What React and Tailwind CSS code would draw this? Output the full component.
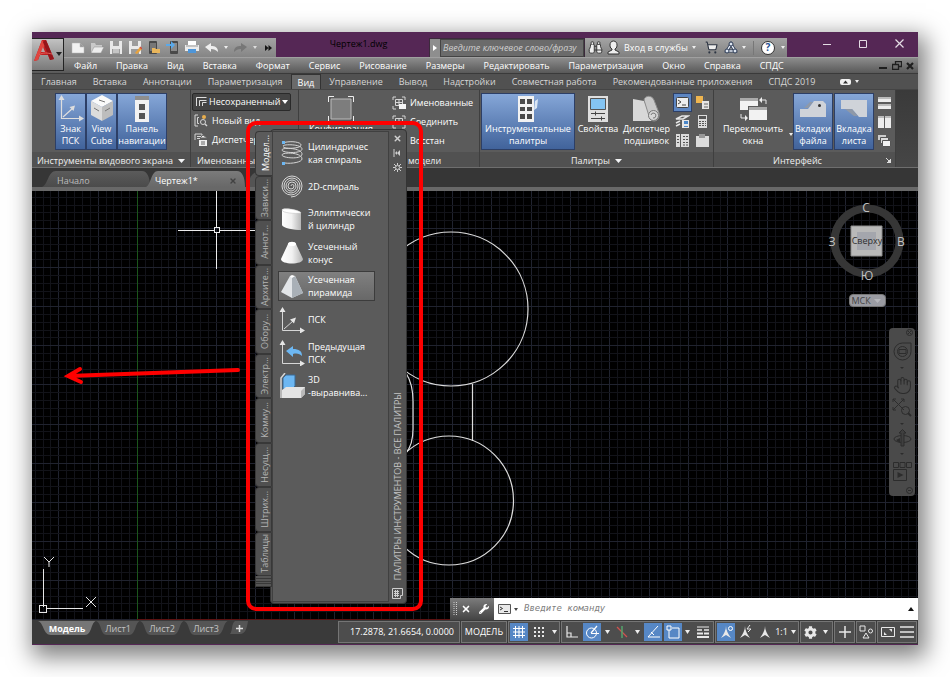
import React from 'react';
import { Binoculars, ShoppingCart, Hand, X } from 'lucide-react';
import { FaCog, FaWrench } from 'react-icons/fa';

const menus = ['Файл', 'Правка', 'Вид', 'Вставка', 'Формат', 'Сервис', 'Рисование', 'Размеры', 'Редактировать', 'Параметризация', 'Окно', 'Справка', 'СПДС'];

const ribbonTabs = ['Главная', 'Вставка', 'Аннотации', 'Параметризация', 'Вид', 'Управление', 'Вывод', 'Надстройки', 'Совместная работа', 'Рекомендованные приложения', 'СПДС 2019'];

const paletteTabs = ['Модел...', 'Зависи...', 'Аннот...', 'Архите...', 'Обору...', 'Электр...', 'Комму...', 'Несущ...', 'Штрих...', 'Таблицы'];

const Icon = ({ w = 16, h = 16, className = '', children }) => (
    <svg width={w} height={h} viewBox={`0 0 ${w} ${h}`} fill="none" aria-hidden="true" className={`shrink-0 ${className}`}>
        {children}
    </svg>
);

const Caret = ({ className = 'text-gray-100' }) => (
    <Icon w={7} h={4} className={className}>
        <path d="M0 0h7L3.5 4z" fill="currentColor" />
    </Icon>
);

/* ---------- title bar ---------- */

const quickIcons = [
    ['Создать', <path d="M1 3h8l4 4v6H1z M9 3v4h4" fill="#f2f2f2" stroke="#b5b5b5" strokeWidth=".5" />],
    ['Открыть', <><path d="M1 13V3h4l1 2h6v2" fill="#c9c9c9" /><path d="M1 13l3-6h10l-3 6z" fill="#ededed" stroke="#8a8a8a" strokeWidth=".5" /></>],
    ['Сохранить', <><path d="M1 1h12v13H1z" fill="#e9e9e9" /><path d="M4 1h6v5H4zM3 9h8v5H3z" fill="#9c9c9c" /><path d="M4 10h6M4 12h6" stroke="#eee" /></>],
    ['Сохранить как', <><path d="M1 1h12v13H1z" fill="#e9e9e9" /><path d="M4 1h6v5H4zM3 9h8v5H3z" fill="#9c9c9c" /><path d="M7 13l5-6 2 2-5 5z" fill="#e8a23c" /><path d="M12 7l2 2" stroke="#d24b3e" strokeWidth="1.5" /></>],
    ['Открыть из облака', <><rect x="2" y="1" width="8" height="13" rx="1" fill="#494949" /><path d="M3 3h6v8H3z" fill="#777" /><path d="M5 13V8h3l1 1h4v4z" fill="#e9b65c" /></>],
    ['Сохранить в облако', <><rect x="4" y="1" width="8" height="13" rx="1" fill="#494949" /><path d="M5 3h6v8H5z" fill="#8a8a8a" /><path d="M0 4h5V1l4 4-4 4V6H0z" fill="#5aa9ea" /></>],
    ['Печать', <><path d="M3 1h8v4H3z" fill="#fff" /><path d="M0 5h14v6H0z" fill="#ececec" /><path d="M3 9h8v4H3z" fill="#4f96d8" /><path d="M1 6h12" stroke="#999" /></>],
];

const QuickAccess = () => (
    <div className="flex h-[19px] w-[212px] items-center bg-linear-to-b from-[#a4a4a4] to-[#858585] pl-1">
        {quickIcons.map(([name, art]) => (
            <button key={name} aria-label={name} className="flex w-[19px] justify-center">
                <Icon w={14} h={15}>{art}</Icon>
            </button>
        ))}
        <button aria-label="Отменить" className="ml-1 flex items-center gap-1.5">
            <Icon w={13} h={10}><path d="M0 4l6-4v3c4 0 7 1 7 6-2-2-4-3-7-3v3z" fill="#efefef" /></Icon>
            <Icon w={4} h={3}><path d="M0 0h4L2 3z" fill="#eee" /></Icon>
        </button>
        <button aria-label="Повторить" className="ml-1.5 flex items-center gap-1.5">
            <Icon w={13} h={10}><path d="M13 4L7 0v3C3 3 0 4 0 9c2-2 4-3 7-3v3z" fill="#777" /></Icon>
            <Icon w={4} h={3}><path d="M0 0h4L2 3z" fill="#ddd" /></Icon>
        </button>
        <button aria-label="Адаптация панели" className="ml-2">
            <Icon w={7} h={6}><path d="M0 0l3.500 3L0 6zM3.500 0L7 3 3.500 6z" fill="#151515" /></Icon>
        </button>
    </div>
);

const TitleBar = () => (
    <header className="flex h-[25px] items-end bg-[#552755]">
        <div className="w-8" />
        <QuickAccess />
        <h1 className="flex-1 pb-[7px] pl-3 text-center text-[9px] leading-3 text-black">Чертеж1.dwg</h1>
        <div className="flex h-[19px] border border-b-0 border-[#3c2a3c]">
            <button aria-label="Свернуть поиск" className="flex w-[10px] items-center justify-center bg-[#8e8e8e]">
                <Icon w={4} h={6}><path d="M0 0l4 3-4 3z" fill="#fff" /></Icon>
            </button>
            <input
                aria-label="Поиск"
                placeholder="Введите ключевое слово/фразу"
                className="w-[144px] border border-[#444] bg-[#6b6b6b] px-[2px] text-[9px] italic placeholder:text-[#cfcfcf]"
            />
        </div>
        <div className="flex h-[19px] w-[202px] items-center bg-linear-to-b from-[#a4a4a4] to-[#808080] pl-[3px] text-[#fff]">
            <Binoculars size={15} strokeWidth={1.5} fill="#eee" className="text-[#333]" />
            <button className="ml-1 flex items-center gap-1 text-[9px] text-white">
                <Icon w={13} h={15}>
                    <path d="M1 14h11v-2c-1-1-3-1-4-2V9c2-1 2-3 2-4 0-2-1-4-3.500-4S3 3 3 5c0 1 0 3 2 4v1c-1 1-3 1-4 2z" fill="#eee" stroke="#333" />
                </Icon>
                Вход в службы
                <Icon w={4} h={3}><path d="M0 0h4L2 3z" fill="#eee" /></Icon>
            </button>
            <button aria-label="Магазин приложений" className="ml-[9px]">
                <ShoppingCart size={13} strokeWidth={2} fill="#eee" className="text-[#2c3442]" />
            </button>
            <button aria-label="Autodesk 360" className="ml-1.5 flex items-center gap-1">
                <Icon w={14} h={13}>
                    <path d="M7 3L3 10h8z" stroke="#2b3a55" strokeWidth="3" />
                    <path d="M7 3L3 10h8z" stroke="#e8edf5" strokeWidth="1.500" />
                    <circle cx="7" cy="3" r="2" fill="#dfe6f0" stroke="#2b3a55" />
                    <circle cx="3" cy="10" r="2" fill="#dfe6f0" stroke="#2b3a55" />
                    <circle cx="11" cy="10" r="2" fill="#dfe6f0" stroke="#2b3a55" />
                </Icon>
                <Icon w={4} h={3}><path d="M0 0h4L2 3z" fill="#eee" /></Icon>
            </button>
            <span className="ml-[7px] h-3.5 w-px bg-[#777]" />
            <button aria-label="Справка" className="ml-[7px] flex items-center gap-1.5">
                <span className="flex size-[14px] items-center justify-center rounded-full border border-[#333] bg-white text-[10px] font-bold text-[#1f4f93]">?</span>
                <Icon w={4} h={3}><path d="M0 0h4L2 3z" fill="#eee" /></Icon>
            </button>
        </div>
        <div className="flex h-full w-[131px] items-center justify-end gap-[28px] pr-[14px] pb-[2px] text-[#e5dce5]">
            <button aria-label="Свернуть"><Icon w={8} h={8}><path d="M0 4.500h8" stroke="currentColor" /></Icon></button>
            <button aria-label="Развернуть"><Icon w={8} h={8}><path d="M.5.5h7v7h-7z" stroke="currentColor" /></Icon></button>
            <button aria-label="Закрыть"><Icon w={9} h={9}><path d="M.5.500l8 8m0-8l-8 8" stroke="currentColor" strokeWidth="1.200" /></Icon></button>
        </div>
    </header>
);

const AppButton = () => (
    <button aria-label="Меню приложения" className="absolute top-1.5 left-0 flex h-[33px] w-8 items-start border border-l-0 border-[#222] bg-linear-to-b from-[#c2c2c2] to-[#7a7a7a] pl-[2px]">
        <Icon w={21} h={24}>
            <path d="M0 22L8 1h4l8 19-4 1-2-5H6l-2 5z" fill="#c11f22" />
            <path d="M8 1l3 5-5 9-2 6-4 1z" fill="#e0453f" />
            <path d="M12 1l8 19-4 1L9 3z" fill="#94151b" />
            <path d="M9 8l2 5H7z" fill="#b5a5a5" />
            <path d="M5 16c4-3 9-2 13-1" stroke="#e5605a" />
        </Icon>
        <Icon w={6} h={4} className="mt-[13px] ml-[1px]"><path d="M0 0h6L3 4z" fill="#222" /></Icon>
    </button>
);

const MenuBar = () => (
    <nav className="flex h-4 items-center border-t border-[#a0a0a0] bg-linear-to-b from-[#8c8c8c] to-[#595959] pr-1 pl-[42px]">
        {menus.map((m) => (
            <button key={m} className="mr-[19px] text-[9px] leading-3 whitespace-nowrap text-white">{m}</button>
        ))}
        <div className="ml-auto flex items-center gap-1 text-[#1f1f1f]">
            <button aria-label="Свернуть чертеж"><Icon w={9} h={9}><path d="M0 7h8" stroke="currentColor" strokeWidth="2" /></Icon></button>
            <button aria-label="Восстановить чертеж"><Icon w={10} h={9}><path d="M3.500 3V.500h6v5H7M.5 3.500h6v5h-6z" stroke="currentColor" strokeWidth="1.300" /></Icon></button>
            <button aria-label="Закрыть чертеж"><Icon w={8} h={8}><path d="M1 1l6 6m0-6L1 7" stroke="currentColor" strokeWidth="2.200" /></Icon></button>
        </div>
    </nav>
);

/* ---------- ribbon ---------- */

const RibbonTabs = () => (
    <div className="flex h-[17px] border-y border-t-[#3a3a3a] border-b-[#444] bg-[#515151] pl-px">
        {ribbonTabs.map((t) => (
            <button
                key={t}
                className={t === 'Вид'
                    ? 'border-x border-t border-[#333] bg-[#6a6a6a] px-[6px] text-[9px] leading-[15px] text-white'
                    : 'px-2 text-[9px] leading-[15px] whitespace-nowrap text-[#d6d6d6]'}
            >
                {t}
            </button>
        ))}
        <button aria-label="Свернуть ленту" className="ml-[17px] flex items-center gap-1">
            <Icon w={11} h={6}><rect width="11" height="6" rx="2" fill="#f2f2f2" /><path d="M3 4.500h5L5.500 1.500z" fill="#333" /></Icon>
            <Icon w={4} h={3}><path d="M0 0h4L2 3z" fill="#eee" /></Icon>
        </button>
    </div>
);

const Panel = ({ title, caret, className = '', titleClass = 'justify-center', children }) => (
    <section className={`flex flex-col border-r border-[#3f3f3f] bg-[#5b5b5b] ${className}`}>
        <div className="flex h-[62px] items-start pt-[3px]">{children}</div>
        <div className={`flex flex-1 items-center gap-[5px] bg-[#515151] pt-[2px] text-[9px] leading-[13px] whitespace-nowrap text-[#efefef] ${titleClass}`}>
            {title}
            {caret && <Caret />}
        </div>
    </section>
);

const BigButton = ({ active, art, lines, className = '' }) => (
    <button
        className={`flex h-[57px] shrink-0 flex-col items-center border text-[9px] leading-3 text-white ${active ? 'border-[#2d3f66] bg-linear-to-b from-[#86a7d8] to-[#41639b]' : 'border-transparent'} ${className}`}
    >
        <span className="flex h-[29px] items-center">{art}</span>
        {lines.map((l) => <span key={l} className="whitespace-nowrap">{l}</span>)}
    </button>
);

const SmallButton = ({ art, label }) => (
    <button className="flex h-[19px] items-center gap-1 text-[9px] whitespace-nowrap text-white">
        {art}
        {label}
    </button>
);

const UcsArt = () => (
    <Icon w={26} h={27}>
        <path d="M3.500 3v20.500H22M5 22L15 13" stroke="#dedede" strokeWidth="1.200" />
        <path d="M.5 5l3-5 3 5zM21 20.500l5 3-5 3zM11.500 12l5.500-1.500-1.500 5.500z" fill="#dedede" />
    </Icon>
);

const CubeArt = () => (
    <Icon w={24} h={27}>
        <path d="M12 0l11 6-11 6L1 6z" fill="#fafafa" />
        <path d="M1 6l11 6v14L1 20z" fill="#dcdcdc" />
        <path d="M23 6l-11 6v14l11-6z" fill="#bdbdbd" />
        <path d="M9 5l6 2M4 13l5 3M15 16l5-3" stroke="#777" />
    </Icon>
);

const NavPanelArt = () => (
    <Icon w={14} h={26}>
        <path d="M0 0h14v26H0z" fill="#f2f2f2" /><path d="M0 0h14v4H0z" fill="#8e8e8e" />
        <path d="M4 8h6v6H4zM4 17h6v6H4z" fill="#555" />
    </Icon>
);

const ViewportsArt = ({ badge }) => (
    <Icon w={14} h={14}>
        <path d="M1 4V1h3M10 1h3v3M1 10v3h3" stroke="#d5d5d5" />
        <path d="M3.500 3.500h7v6h-7zM7 3v7M3 6.500h8" stroke="#d5d5d5" />
        {badge ? <path d="M7 8h7v5H7z" fill="#f5f5f5" /> : <path d="M13 10v3h-3" stroke="#d5d5d5" />}
    </Icon>
);

const PaletteArt = () => (
    <Icon w={20} h={26}>
        <path d="M0 0h16v26H0z" fill="#f2f2f2" />
        <path d="M17 5l3-2-1 9-3 2z" fill="#dbe7f5" />
        <path d="M2 3h5v5H2zM9 3h5v5H9zM2 11h5v4H2zM9 11h5v4H9zM2 18h5v5H2zM9 18h5v5H9z" fill="#4a4a4a" />
    </Icon>
);

const PropsArt = () => (
    <Icon w={20} h={26}>
        <path d="M0 0h20v26H0z" fill="#dfdfdf" />
        <path d="M2.500 2.500h15v11h-15z" fill="#84c4f2" stroke="#555" />
        <path d="M3 17.500h14M3 22.500h14M7.500 15.500v4M13.500 20.500v4" stroke="#444" />
    </Icon>
);

const SheetSetArt = () => (
    <Icon w={27} h={27}>
        <path d="M0 4l11 2 9 20H0z" fill="#d8d8d8" />
        <path d="M11 5c1-5 8-5 10 0l5 13c1 5-2 8-5 8s-4-2-5-5z" fill="#c9c9c9" stroke="#8c8c8c" />
        <circle cx="20.500" cy="20.500" r="5" fill="#d8d8d8" stroke="#777" />
        <path d="M18 20a2.500 2.500 0 1 1 2 3" stroke="#777" />
    </Icon>
);

const SwitchArt = () => (
    <Icon w={27} h={24}>
        <path d="M0 1h18v12H0z" fill="#f2f2f2" /><path d="M0 1h18v3H0z" fill="#aaa" />
        <path d="M8 9h19v15H8z" fill="#5b5b5b" /><path d="M9 10h18v13H9z" fill="#f2f2f2" /><path d="M9 10h18v3H9z" fill="#aaa" />
        <path d="M21 3h5v4M1 17v4h5" stroke="#e8e8e8" /><path d="M22 0v6l-3-3zM5 18l3 3-3 3z" fill="#eee" />
    </Icon>
);

const FileTabsArt = () => (
    <Icon w={26} h={17}>
        <path d="M0 9h8l6-8h9l3 3v13H0z" fill="#cfd3d9" /><path d="M4 8L10 2h3L8 8z" fill="#8f99a8" />
        <circle cx="19.500" cy="5.500" r="1.500" fill="#333" />
    </Icon>
);

const LayoutTabsArt = () => (
    <Icon w={26} h={17}>
        <path d="M0 0h26v17h-8l-7-8H0z" fill="#cfd3d9" /><path d="M4 9h7l6 7h-4z" fill="#8f99a8" />
    </Icon>
);

const toolGrid = [
    ['Командная строка', <><rect x="1.500" y="2.500" width="12" height="10" rx="1" fill="#eee" stroke="#444" /><path d="M3 5l3 2-3 2M7 10h4" stroke="#444" /></>],
    ['Диспетчер внешних ссылок', <><path d="M1 1h7v7H1z" fill="#efb54f" /><path d="M7 6h7v8H7z" fill="#e6e6e6" /><path d="M9 9h4M9 12h4M9.500 2v3" stroke="#666" /></>],
    ['Слои', <><path d="M1 5l6-3h6l-5 3zM1 9l4-2M1 12l4-2" stroke="#e6e6e6" strokeWidth="1.500" /><path d="M7 6h7v8H7z" fill="#e6e6e6" /><path d="M9 7h4v3H9zM9 12h4v1H9z" fill="#4a86c8" /></>],
    ['Калькулятор', <><path d="M3 1h9v13H3z" fill="#dcdcdc" /><path d="M4 2h7v3H4z" fill="#555" /><path d="M4 7.500h7M4 9.500h7M4 11.500h7" stroke="#555" strokeDasharray="2 1" /></>],
    ['Блоки', <><path d="M1 1h4v13H1zM6 1h8v13H6z" fill="#dcdcdc" /><path d="M2 3.500h2M2 6.500h2M2 9.500h2M8 3.500h5M8 6.500h5M8 9.500h5M8 12h5" stroke="#555" strokeDasharray="2 1" /></>],
    ['Буфер', <><path d="M1 3h13v11H1z" fill="#dcdcdc" /><path d="M4 1h6v4H4z" fill="#999" /></>],
];

const windowIcons = [
    ['Мозаика по горизонтали', <><path d="M0 1h13v5H0zM0 8h13v5H0z" fill="#ececec" /><path d="M0 1h13v2H0zM0 8h13v2H0z" fill="#bbb" /></>],
    ['Мозаика по вертикали', <><path d="M0 1h6v12H0zM7 1h6v12H7z" fill="#ececec" /><path d="M0 1h6v2H0zM7 1h6v2H7z" fill="#bbb" /></>],
    ['Каскадом', <><path d="M0 1h8v5H0z" fill="#ccc" /><path d="M2.500 3.500h8v6h-8z" fill="#ddd" stroke="#555" /><path d="M4.500 6.500h8v6h-8z" fill="#f2f2f2" stroke="#555" /></>],
];

const Ribbon = () => (
    <div className="flex h-[78px] border-b border-[#6e6e6e] bg-linear-to-b from-[#3a3a3a] to-[#464646]">
        <Panel title="Инструменты видового экрана" caret className="w-[159px]" titleClass="pl-[5px]">
            <div className="flex pl-[23px]">
                <BigButton active art={<UcsArt />} lines={['Знак', 'ПСК']} className="w-[31px]" />
                <BigButton active art={<CubeArt />} lines={['View', 'Cube']} className="w-[31px]" />
                <BigButton active art={<NavPanelArt />} lines={['Панель', 'навигации']} className="w-[50px]" />
            </div>
        </Panel>
        <Panel title="Именованные" className="w-[108px]" titleClass="pl-[6px]">
            <div className="flex flex-col pl-px">
                <label className="relative flex h-[18px] w-[99px] items-center rounded-xs border border-[#2a2a2a] bg-[#444]">
                    <Icon w={11} h={10} className="absolute left-[3px]">
                        <path d="M.5 9V.500h10M3.500 9V3.500h7M6.500 9V5.500h4" stroke="#ddd" />
                    </Icon>
                    <select aria-label="Вид" className="h-full w-full appearance-none pl-4 text-[9px] text-white">
                        <option>Несохраненный</option>
                    </select>
                    <span className="pointer-events-none absolute right-[2px]"><Icon w={6} h={4}><path d="M0 0h6L3 4z" fill="#fff" /></Icon></span>
                </label>
                <div className="flex flex-col pl-[2px]">
                    <SmallButton label="Новый вид" art={<Icon w={14} h={13}><path d="M4 1H1v11h3M5 3.500H3.500v6H5" stroke="#d5d5d5" /><circle cx="9" cy="8" r="2.500" stroke="#d5d5d5" /><path d="M11 10l2 2" stroke="#d5d5d5" strokeWidth="1.500" /><circle cx="10" cy="3" r="2" fill="#e9ae4c" /></Icon>} />
                    <SmallButton label="Диспетчер" art={<Icon w={14} h={13}><path d="M1 7V1h7v3M3 3.500h4M3 5.500h3" stroke="#d5d5d5" /><path d="M5 7h8v6H5z" fill="#eee" /><path d="M6 5l3-3 4 3zM7 9h4M7 11h4" fill="#eee" stroke="#666" /></Icon>} />
                </div>
            </div>
        </Panel>
        <Panel title="модели" className="w-[181px]" titleClass="pl-[109px]">
            <BigButton
                className="ml-[6px] w-[72px]"
                lines={['Конфигурация']}
                art={<Icon w={26} h={26}><path d="M3 3h20v20H3z" fill="#7d7d7d" stroke="#bbb" /><path d="M.5 6V.500H6M20 .500h5.500V6M.5 20v5.500H6M20 25.500h5.500V20" stroke="#eee" /></Icon>}
            />
            <div className="ml-[15px] flex flex-col">
                <SmallButton label="Именованные" art={<ViewportsArt badge />} />
                <SmallButton label="Соединить" art={<ViewportsArt />} />
                <SmallButton label="Восстан" art={<ViewportsArt />} />
            </div>
        </Panel>
        <Panel title="Палитры" caret className="w-[234px]">
            <BigButton active art={<PaletteArt />} lines={['Инструментальные', 'палитры']} className="ml-px w-[94px]" />
            <BigButton art={<PropsArt />} lines={['Свойства']} className="w-[46px]" />
            <BigButton art={<SheetSetArt />} lines={['Диспетчер', 'подшивок']} className="w-[51px]" />
            <div className="ml-px grid grid-cols-2 gap-x-px">
                {toolGrid.map(([name, art], i) => (
                    <button key={name} aria-label={name} className={`flex h-[19px] w-[19px] items-center justify-center ${i === 0 ? 'border border-[#2d3f66] bg-[#5d86c2]' : ''}`}>
                        <Icon w={15} h={15}>{art}</Icon>
                    </button>
                ))}
            </div>
        </Panel>
        <Panel
            title={<><span className="flex-1 text-center">Интерфейс</span><Icon w={5} h={5} className="mr-1"><path d="M0 0l4 4M5 1v4H1z" stroke="#ddd" fill="#ddd" /></Icon></>}
            className="w-[182px]"
        >
            <BigButton art={<SwitchArt />} lines={['Переключить', 'окна']} className="ml-[3px] w-[72px]" />
            <Icon w={4} h={3} className="mt-10"><path d="M0 0h4L2 3z" fill="#eee" /></Icon>
            <BigButton active art={<FileTabsArt />} lines={['Вкладки', 'файла']} className="w-[40px]" />
            <BigButton active art={<LayoutTabsArt />} lines={['Вкладка', 'листа']} className="ml-px w-[40px]" />
            <div className="ml-1 flex flex-col">
                {windowIcons.map(([name, art]) => (
                    <button key={name} aria-label={name} className="flex h-[19px] items-center"><Icon w={13} h={14}>{art}</Icon></button>
                ))}
            </div>
        </Panel>
    </div>
);

const FileTabs = () => (
    <div className="flex h-[23px] items-end border-b-4 border-[#686868] bg-[#363636] pl-[10px]">
        <button className="h-4 w-[108px] bg-linear-to-b from-[#5b5b5b] to-[#4b4b4b] pt-[3px] pl-[15px] text-left text-[9px] leading-[13px] text-[#bdbdbd] [clip-path:path('M0_16C6_14_6_0_14_0H100C105_0_108_6_108_16Z')]">Начало</button>
        <div className="-ml-1 flex h-4 w-[99px] items-center bg-linear-to-b from-[#7b7b7b] to-[#686868] pt-[3px] pr-[8px] pl-[9px] leading-[13px] [clip-path:path('M0_16C5_14_5_0_12_0H91C96_0_99_6_99_16Z')]">
            <button className="text-[9px] text-white">Чертеж1*</button>
            <button aria-label="Закрыть вкладку" className="ml-auto text-[#424242]"><X size={8} strokeWidth={4} /></button>
        </div>
        <button aria-label="Новый чертеж" className="ml-1 h-4 w-[26px] rounded-t-xl bg-[#545454]" />
    </div>
);

/* ---------- drawing area ---------- */

const STEP_X = 39.36;
const STEP_Y = 39.1;

const Grid = () => {
    const cols = Array.from({ length: 260 }, (_, i) => i - 15);
    const rows = Array.from({ length: 150 }, (_, i) => i - 60);
    const lineColor = (i) => (i % 5 ? '#121319' : '#20232f');
    return (
        <g shapeRendering="crispEdges">
            {cols.map((i) => (
                <path key={`c${i}`} d={`M${Math.round(105 + (i * STEP_X) / 5)}.5 0V2000`} stroke={lineColor(i)} />
            ))}
            {rows.map((i) => (
                <path key={`r${i}`} d={`M0 ${Math.round(428 + (i * STEP_Y) / 5)}.5H3000`} stroke={lineColor(i)} />
            ))}
            <path d="M105.500 0V429" stroke="#1b551b" />
            <path d="M105 428.500H3000" stroke="#5c1212" />
        </g>
    );
};

const ViewCube = () => (
    <div className="absolute top-[8px] right-[10px] flex w-[82px] flex-col items-center">
        <svg width="82" height="88" viewBox="-2 -3 82 88" role="img" aria-label="Видовой куб" className="overflow-visible font-[Open_Sans]">
            <circle cx="39" cy="39" r="32.500" fill="none" stroke="#363636" strokeWidth="8" />
            <path d="M23 24h31v30H23z" fill="#b9b9b9" stroke="#8d8d8d" />
            <path d="M29 30h19v18H29z" fill="#a4a6ad" />
            <g fill="#c2c2c2" fontSize="12" textAnchor="middle">
                <text x="38" y="10">С</text>
                <text x="73" y="44">В</text>
                <text x="4" y="44">З</text>
                <text x="39" y="78">Ю</text>
            </g>
            <text x="39" y="42" fill="#2d2d2d" fontSize="9" textAnchor="middle">Сверху</text>
        </svg>
        <button className="mt-[7px] flex h-[13px] w-[37px] items-center justify-between rounded-sm border border-[#777] bg-[#9a9ba2] pr-1 pl-[2px] text-[9px] leading-none text-[#444]">
            МСК
            <Icon w={7} h={4}><path d="M0 0h7L3.500 4z" fill="#b5b6bb" /></Icon>
        </button>
    </div>
);

const NavBar = () => (
    <div className="absolute top-[137px] right-[3px] flex h-[168px] w-[26px] flex-col items-center rounded-sm bg-[#4a4a4a] text-[#2c2c2c]">
        <button aria-label="Закрыть панель" className="mt-px mr-[2px] self-end"><Icon w={7} h={7}><circle cx="3.500" cy="3.500" r="3" stroke="currentColor" /><path d="M2 2l3 3m0-3L2 5" stroke="currentColor" /></Icon></button>
        <button aria-label="Штурвал" className="mt-[6px] flex flex-col items-center gap-[6px]">
            <Icon w={19} h={19}><path d="M9.500 1H18v8.500a8.500 8.500 0 1 1-8.500-8.500z" stroke="currentColor" /><circle cx="9.500" cy="9.500" r="5" stroke="currentColor" /><path d="M6 7.500h7v4H6z" stroke="currentColor" /></Icon>
            <Icon w={4} h={2}><path d="M0 0h4L2 2z" fill="currentColor" /></Icon>
        </button>
        <button aria-label="Панорамирование" className="mt-[7px]"><Hand size={19} strokeWidth={1.3} /></button>
        <button aria-label="Зумирование" className="mt-[3px] flex flex-col items-center gap-[6px]">
            <Icon w={20} h={19}><path d="M1 1l11 11M12 1L1 12M1 4V1h3M9 1h3v3M1 9v3h3" stroke="currentColor" /><circle cx="13.500" cy="12.500" r="4" stroke="currentColor" /><path d="M16 15l3 3" stroke="currentColor" strokeWidth="2" /></Icon>
            <Icon w={4} h={2}><path d="M0 0h4L2 2z" fill="currentColor" /></Icon>
        </button>
        <button aria-label="Орбита" className="mt-[4px] flex flex-col items-center gap-[6px]">
            <Icon w={19} h={18}><ellipse cx="9.500" cy="10" rx="8.500" ry="3.500" stroke="currentColor" /><path d="M8 17V4H6l3.500-3.500L13 4h-2v13z" fill="#3f3f3f" stroke="currentColor" /><path d="M3 11l4 3V9z" fill="currentColor" /></Icon>
            <Icon w={4} h={2}><path d="M0 0h4L2 2z" fill="currentColor" /></Icon>
        </button>
        <button aria-label="ShowMotion" className="mt-[7px]"><Icon w={19} h={19}><path d="M.5.500h5v5h-5zM7 .500h5v5H7zM13.500.500h5v5h-5zM.5 7.500h13v11H.5z" stroke="currentColor" /><path d="M4.500 10l6 3-6 3z" fill="currentColor" /></Icon></button>
        <button aria-label="Настройка панели" className="mt-auto mr-[2px] mb-[2px] self-end"><Icon w={7} h={7}><circle cx="3.500" cy="3.500" r="3" stroke="currentColor" /><path d="M2 3.500h3" stroke="currentColor" /></Icon></button>
    </div>
);

const CommandLine = () => (
    <div className="absolute right-0 bottom-0 left-[418px] flex h-[22px] bg-white">
        <div className="flex w-11 items-center bg-linear-to-b from-[#7c7c7c] to-[#444] pl-[3px] text-white">
            <Icon w={5} h={14}><path d="M1 0v14M3.500 0v14" stroke="#cfcfcf" strokeDasharray="1 1" /></Icon>
            <button aria-label="Закрыть" className="ml-[3px]"><X size={10} strokeWidth={4} /></button>
            <button aria-label="Адаптация" className="ml-[8px]"><FaWrench size={10} /></button>
        </div>
        <button aria-label="Последние команды" className="ml-1 flex items-center gap-[3px]">
            <Icon w={13} h={10}><path d="M.5.500h12v9H.5z" fill="#e8e8e8" stroke="#555" /><path d="M2 3l2.500 1.500L2 6M6 7.500h4" stroke="#333" /></Icon>
            <Icon w={4} h={3}><path d="M0 0h4L2 3z" fill="#444" /></Icon>
        </button>
        <input aria-label="Команда" placeholder="Введите команду" className="min-w-0 flex-1 pl-1.5 font-[DejaVu_Sans_Mono] text-[9px] italic placeholder:text-[#808080]" />
        <button aria-label="Развернуть журнал" className="mr-1"><Icon w={6} h={4}><path d="M0 4h6L3 0z" fill="#111" /></Icon></button>
    </div>
);

const DrawingArea = () => (
    <main className="relative min-h-[429px] flex-1 overflow-hidden bg-black">
        <svg className="absolute inset-0 h-full w-full" fill="none" aria-hidden="true">
            <Grid />
            <g stroke="#dcdcdc" strokeWidth="1.200">
                <circle cx="419" cy="118" r="77" />
                <circle cx="417" cy="309.500" r="64.500" />
                <path d="M440.500 193v57M374 182c5 8 7 16 7 28v28c0 10-2 18-7 24" />
            </g>
            <path d="M184.500 0v36M184.500 42v36M146 39.500h36M188 39.500h37M182.500 36.500h5v5h-5z" stroke="#ececec" shapeRendering="crispEdges" />
        </svg>
        <svg width="60" height="60" viewBox="0 0 60 60" fill="none" stroke="#e6e6e6" aria-hidden="true" className="absolute bottom-[3px] left-[7px]">
            <path d="M4.500 12v38M8 51.500h36M.5 48.500h7v7h-7z" shapeRendering="crispEdges" />
            <path d="M5 0l5 5 5-5M10 5v5M47 40l10 10M57 40L47 50" />
        </svg>
        <ViewCube />
        <NavBar />
        <CommandLine />
    </main>
);

/* ---------- tool palette ---------- */

const paletteItems = [
    ['Цилиндричес', 'кая спираль', <><path d="M5 2.500c9-2 18 0 17 3s-17 4-18 1M4 6c0-2 19-2 19 3s-20 4-20 1 20-2 20 4-20 4-20 1 20-3 20 4c0 3-10 5-17 4" /><path d="M3 1h3v3H3zM3 22h3v3H3z" fill="#6db7f2" stroke="none" /></>],
    ['2D-спираль', null, <path d="M12 13a1.500 1.500 0 0 1 3 0 3 3 0 0 1-6 0 4 4 0 0 1 8 0 5 5 0 0 1-10 0 6 6 0 0 1 12 0 7 7 0 0 1-14 0 8 8 0 0 1 16 0 9 9 0 0 1-18 0 10 10 0 0 1 20 0 11 11 0 0 1-11 11" />],
    ['Эллиптически', 'й цилиндр', <><path d="M3 4c0-3 19 0 19 3v17c-6 0-19-2-19-5z" fill="url(#solid)" stroke="none" /><path d="M3 4c0-3 19 0 19 3-5 1-19 0-19-3z" fill="#fff" stroke="#bbb" strokeWidth=".5" /></>],
    ['Усеченный', 'конус', <><path d="M9 4c1-3 7-3 8 0l7 15c0 6-22 6-22 0z" fill="url(#solid)" stroke="none" /><ellipse cx="13" cy="4" rx="4" ry="2" fill="#fff" stroke="none" /></>],
    ['Усеченная', 'пирамида', <><path d="M11 3h5l8 17-11 5L2 19z" fill="#e2e5e8" stroke="none" /><path d="M13 4l3-1 8 17-11 5z" fill="#a9b0b7" stroke="none" /><path d="M11 3l2-1 3 1-3 2z" fill="#fff" stroke="none" /></>],
    ['ПСК', null, <><path d="M3.500 4v19.500H22M5 22l9-8" /><path d="M.5 5l3-5 3 5zM21 20.500l5 3-5 3zM11 12.500l6-2-2 6z" fill="#e6e6e6" stroke="none" /></>],
    ['Предыдущая', 'ПСК', <><path d="M3.500 4v19.500H22" /><path d="M.5 5l3-5 3 5zM21 20.500l5 3-5 3z" fill="#e6e6e6" stroke="none" /><path d="M7 11l7-5v3c6 0 9 2 9 7-2-2-5-3-9-2v3z" fill="#6db7f2" stroke="none" /></>],
    ['3D', '-выравнива...', <><path d="M4 5l3-3h9v11l-3 3H4z" fill="#6db7f2" stroke="#3a6a96" /><path d="M2 25V5l4-5" strokeWidth="1.500" /><path d="M3 17l4-3h19v7l-4 4H3z" fill="#e4e4e4" stroke="none" /><path d="M22 18l4-4v7l-4 4z" fill="#b9b9b9" stroke="none" /></>],
];

const ToolPalette = () => (
    <aside className="absolute top-[97px] left-[223px] flex h-[475px] w-[152px] text-[9px]">
        <div className="z-10 mt-[2px] flex h-[456px] w-[18px] flex-col">
            <div className="flex h-[445px] flex-col">
                {paletteTabs.map((t, i) => (
                    <button
                        key={t}
                        className={`flex flex-1 items-center justify-center rounded-l-sm border border-[#383838] pl-[2px] leading-none ${i === 0 ? 'border-r-0 bg-[#5b5b5b] text-white' : 'bg-[#505050] text-[#b4b4b4]'}`}
                    >
                        <span className="rotate-180 whitespace-nowrap [writing-mode:vertical-rl]">{t}</span>
                    </button>
                ))}
            </div>
            <div className="flex flex-1 flex-col justify-evenly border border-t-0 border-[#383838] bg-[#555]">
                <span className="h-px bg-[#383838]" />
                <span className="h-px bg-[#383838]" />
                <span className="h-px bg-[#383838]" />
            </div>
        </div>
        <div className="-ml-[2px] flex flex-1 rounded-sm border border-[#343434] bg-[#535353] p-px">
            <div className="flex-1 border border-[#404040] bg-[#5b5b5b] pt-1 pr-[13px] pl-[5px]">
                <svg width="0" height="0" className="absolute" aria-hidden="true">
                    <linearGradient id="solid"><stop offset="0" stopColor="#fff" /><stop offset=".5" stopColor="#f1f1f1" /><stop offset="1" stopColor="#b5b5b5" /></linearGradient>
                </svg>
                <div className="flex h-[267px] flex-col">
                    {paletteItems.map(([a, b, art], i) => (
                        <div key={a} className="flex flex-1 items-center">
                            <button className={`flex h-[30px] w-[97px] items-center gap-[3px] border text-left leading-[13px] text-white ${i === 4 ? 'border-[#3c3c3c] bg-linear-to-b from-[#808080] to-[#686868]' : 'border-transparent'}`}>
                                <svg width="26" height="26" viewBox="0 0 26 26" fill="none" stroke="#d6d6d6" aria-hidden="true" className="shrink-0">{art}</svg>
                                <span className="whitespace-nowrap">{a}{b && <><br />{b}</>}</span>
                            </button>
                        </div>
                    ))}
                </div>
            </div>
            <div className="flex w-4 flex-col items-center py-[3px] text-[#cfcfcf]">
                <button aria-label="Закрыть палитру"><X size={9} strokeWidth={4} /></button>
                <button aria-label="Автоскрытие" className="mt-[6px]"><Icon w={8} h={8}><path d="M1 0v8" stroke="currentColor" /><path d="M4 2L2 4l2 2zM7 1L4 4l3 3z" fill="currentColor" /></Icon></button>
                <button aria-label="Свойства палитры" className="mt-[6px]"><Icon w={9} h={9}><circle cx="4.500" cy="4.500" r="2" stroke="currentColor" /><path d="M4.500 0v2M4.500 7v2M0 4.500h2M7 4.500h2M1 1l2 2M6 6l2 2M8 1L6 3M3 6L1 8" stroke="currentColor" /></Icon></button>
                <span className="mt-auto rotate-180 leading-none whitespace-nowrap text-[#c4c4c4] [writing-mode:vertical-rl]">ПАЛИТРЫ ИНСТРУМЕНТОВ - ВСЕ ПАЛИТРЫ</span>
                <button aria-label="Набор палитр" className="mt-2"><Icon w={11} h={11}><path d="M.5.500h10v7h-2v3h-8zM2 3.500h5M2 5.500h5M2 7.500h5M3.500 2v7M5.500 2v7" stroke="currentColor" /></Icon></button>
            </div>
        </div>
    </aside>
);

const Callout = () => (
    <>
        <div className="pointer-events-none absolute top-[89px] left-[214px] h-[490px] w-[177px] rounded-[10px] border-4 border-[#fe0000]" />
        <svg width="178" height="20" viewBox="0 0 178 20" fill="none" stroke="#fe0000" strokeWidth="4" strokeLinecap="round" aria-hidden="true" className="absolute top-[334px] left-[31px]">
            <path d="M175 4L5 10M17 3L5 10l13 6" />
        </svg>
    </>
);

/* ---------- bottom bar ---------- */

const StatusGroup = ({ className = '', children }) => (
    <div className={`flex h-[22px] shrink-0 items-center justify-around border border-[#757575] bg-[#4d4d4d] ${className}`}>{children}</div>
);

const StatusButton = ({ name, on, children }) => (
    <button aria-label={name} className={`flex h-[18px] w-[18px] items-center justify-center ${on ? 'bg-[#5687c5]' : ''}`}>
        <Icon w={14} h={14} className="text-[#e8e8e8]">{children}</Icon>
    </button>
);

const SmallCaret = () => (
    <button aria-label="Параметры" className="flex w-2 justify-center"><Icon w={5} h={4}><path d="M0 0h5L2.500 4z" fill="#eee" /></Icon></button>
);

const ScaleMark = <path d="M7 1c0 4-2 8-5 12l5-3 5 3C9 9 7 5 7 1z" fill="currentColor" />;

const BottomBar = () => (
    <footer className="flex h-[25px] items-start justify-between border-b border-[#552755] bg-[#3a3a3a] pt-px">
        <div className="flex pl-1.5 text-[9px]">
            <button className="h-[15px] w-[58px] bg-[#767676] leading-[15px] font-bold text-white [clip-path:path('M0_0H58C53_1_54_14_47_14H13C5_14_6_2_0_0Z')]">Модель</button>
            {['Лист1', 'Лист2', 'Лист3'].map((l) => (
                <button key={l} className="h-[15px] w-[44px] bg-[#555] leading-[15px] text-[#c2c2c2] [clip-path:path('M0_0H44C39_1_40_14_33_14H11C4_14_6_2_0_0Z')]">{l}</button>
            ))}
            <button aria-label="Новый лист" className="ml-0.5 flex h-[14px] w-[18px] items-center justify-center bg-[#555] [clip-path:path('M5_0H18C17_6_16_13_10_13H0C3_9_1_3_5_0Z')]">
                <Icon w={7} h={7}><path d="M3.500 0v7M0 3.500h7" stroke="#ddd" strokeWidth="1.500" /></Icon>
            </button>
        </div>
        <div className="flex gap-px pr-px text-[9px] text-white">
            <StatusGroup className="w-[122px] pl-1.5">17.2878, 21.6654, 0.0000</StatusGroup>
            <StatusGroup className="w-[46px]"><button>МОДЕЛЬ</button></StatusGroup>
            <StatusGroup className="w-[52px]">
                <StatusButton name="Сетка" on><path d="M3.500 1v12M7 1v12M10.500 1v12M1 3.500h12M1 7h12M1 10.500h12" stroke="#fff" /></StatusButton>
                <StatusButton name="Привязка к сетке"><path d="M2 3h11M2 7h11M2 11h11" stroke="currentColor" strokeWidth="2" strokeDasharray="2 2" /></StatusButton>
                <SmallCaret />
            </StatusGroup>
            <StatusGroup className="w-[153px]">
                <StatusButton name="Орто"><path d="M2 1v11h11M2 8h4v4" stroke="currentColor" strokeWidth="1.200" /></StatusButton>
                <StatusButton name="Полярное отслеживание" on><circle cx="6.500" cy="8" r="5" stroke="#fff" /><path d="M6 8.500h8M6 8l6-7" stroke="#fff" strokeWidth="1.200" /></StatusButton>
                <SmallCaret />
                <StatusButton name="Изометрия"><path d="M2 2l10 10" stroke="#d0524f" strokeWidth="1.200" /><path d="M7 1v12" stroke="#55a56b" strokeWidth="1.500" /></StatusButton>
                <SmallCaret />
                <StatusButton name="Объектное отслеживание" on><path d="M12 1L2 12h12" stroke="#fff" /><path d="M5 7l3 3" stroke="#fff" /></StatusButton>
                <StatusButton name="Объектная привязка" on><path d="M3 5v8h10V3H6M1 1h4v4H1z" stroke="#fff" /></StatusButton>
                <SmallCaret />
                <StatusButton name="Вес линий"><path d="M1 2h12" stroke="currentColor" /><path d="M1 5h5M8 5h5" stroke="currentColor" strokeWidth="1.500" /><path d="M1 8.500h6M8 8.500h5M1 12h12" stroke="currentColor" strokeWidth="2" /></StatusButton>
            </StatusGroup>
            <StatusGroup className="w-[84px]">
                <StatusButton name="Видимость аннотаций" on>{ScaleMark}<circle cx="11.500" cy="3.500" r="2" stroke="#fff" /></StatusButton>
                <StatusButton name="Автомасштаб">{ScaleMark}<path d="M12 0l-3 4h4l-3 3" stroke="currentColor" /></StatusButton>
                <StatusButton name="Масштаб аннотаций">{ScaleMark}</StatusButton>
                <button className="text-[9px]">1:1</button>
                <SmallCaret />
            </StatusGroup>
            <StatusGroup className="w-[33px]">
                <button aria-label="Рабочее пространство"><FaCog size={13} className="text-[#e8e8e8]" /></button>
                <SmallCaret />
            </StatusGroup>
            <StatusGroup className="w-[21px]"><StatusButton name="Монитор аннотаций"><path d="M7 1v12M1 7h12" stroke="currentColor" strokeWidth="1.500" /></StatusButton></StatusGroup>
            <StatusGroup className="w-[20px]"><StatusButton name="Изолировать объекты"><path d="M1 1h5v5H1zM7 8l3 5H4z" stroke="currentColor" /><circle cx="11.500" cy="6" r="2" stroke="currentColor" /></StatusButton></StatusGroup>
            <StatusGroup className="w-[40px]">
                <StatusButton name="Очистить экран"><path d="M.5 2.500h13v9H.5z" stroke="currentColor" /><path d="M3 10V7l3 3zM11 4v3L8 4z" fill="currentColor" /></StatusButton>
                <StatusButton name="Адаптация"><path d="M0 2h14M0 7h14M0 12h14" stroke="currentColor" strokeWidth="1.500" /></StatusButton>
            </StatusGroup>
        </div>
    </footer>
);

export default function App() {
    return (
        <div className="flex min-h-screen flex-col bg-white p-8 font-['Open_Sans','Noto_Sans',sans-serif]">
            <div className="relative flex flex-1 flex-col shadow-[4px_8px_22px_4px_rgba(0,0,0,0.5)]">
                <TitleBar />
                <MenuBar />
                <RibbonTabs />
                <Ribbon />
                <FileTabs />
                <DrawingArea />
                <BottomBar />
                <AppButton />
                <ToolPalette />
                <Callout />
            </div>
        </div>
    );
}
